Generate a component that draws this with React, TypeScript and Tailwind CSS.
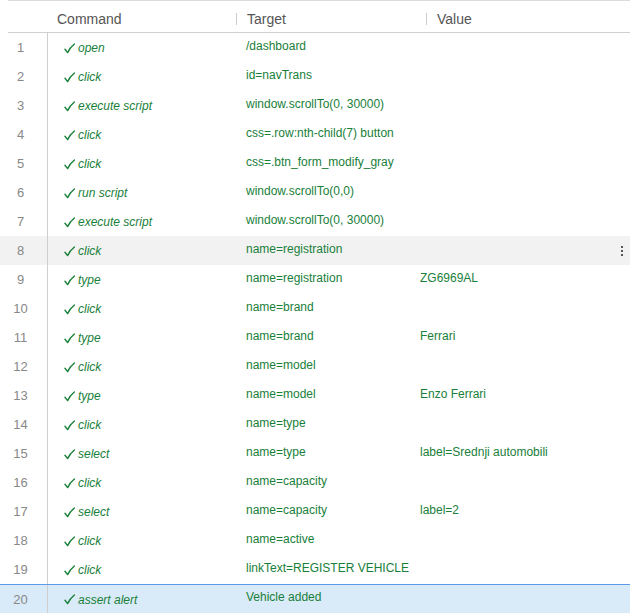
import React from 'react';

type Row = { cmd: string; target: string; value?: string };

const ROWS: Row[] = [
    { cmd: 'open', target: '/dashboard' },
    { cmd: 'click', target: 'id=navTrans' },
    { cmd: 'execute script', target: 'window.scrollTo(0, 30000)' },
    { cmd: 'click', target: 'css=.row:nth-child(7) button' },
    { cmd: 'click', target: 'css=.btn_form_modify_gray' },
    { cmd: 'run script', target: 'window.scrollTo(0,0)' },
    { cmd: 'execute script', target: 'window.scrollTo(0, 30000)' },
    { cmd: 'click', target: 'name=registration' },
    { cmd: 'type', target: 'name=registration', value: 'ZG6969AL' },
    { cmd: 'click', target: 'name=brand' },
    { cmd: 'type', target: 'name=brand', value: 'Ferrari' },
    { cmd: 'click', target: 'name=model' },
    { cmd: 'type', target: 'name=model', value: 'Enzo Ferrari' },
    { cmd: 'click', target: 'name=type' },
    { cmd: 'select', target: 'name=type', value: 'label=Srednji automobili' },
    { cmd: 'click', target: 'name=capacity' },
    { cmd: 'select', target: 'name=capacity', value: 'label=2' },
    { cmd: 'click', target: 'name=active' },
    { cmd: 'click', target: 'linkText=REGISTER VEHICLE' },
    { cmd: 'assert alert', target: 'Vehicle added' },
];

const Check = () => (
    <svg width="11" height="11" viewBox="0 0 11 11" className="mr-[3px] shrink-0">
        <path d="M1 6.2 L3.6 9.6 Q6 4.5 10.4 1" fill="none" stroke="#19803a" strokeWidth="1.4" strokeLinecap="round" strokeLinejoin="round" />
    </svg>
);

export default function App() {
    return (
        <div className="w-[630px] h-[614px] overflow-hidden bg-white text-[12px]" style={{ fontFamily: '"Liberation Sans", Arial, sans-serif' }}>
            {/* Header */}
            <div className="ml-2 border-t border-[#dcdcdc] h-[33px] border-b border-b-[#d0d0d0] flex items-center pt-[5px] text-[14px] text-[#555]">
                <div className="w-[228px] pl-[49px]">Command</div>
                <div className="w-[190px] flex items-center">
                    <span className="w-px h-[12px] bg-[#ccc] mr-[10px]" />
                    Target
                </div>
                <div className="flex items-center">
                    <span className="w-px h-[12px] bg-[#ccc] mr-[10px]" />
                    Value
                </div>
            </div>

            {/* Rows */}
            {ROWS.map((r, i) => {
                const n = i + 1;
                const hover = n === 8;
                const selected = n === 20;
                return (
                    <div
                        key={n}
                        className={`relative flex h-[29px] ${hover ? 'bg-[#f2f2f2]' : ''} ${selected ? 'bg-[#d9eaf8] border-t border-[#5b9be8]' : ''}`}
                    >
                        <div className="w-[47px] pl-[6px] pr-3 flex items-center justify-center text-[#888] text-[13px] pt-[1px]">{n}</div>
                        <div className="w-px bg-[#cfcfcf]" />
                        <div className="w-[198px] pl-[16px] flex items-center text-[#19803a] pt-[1px]">
                            <Check />
                            <span className="italic">{r.cmd}</span>
                        </div>
                        <div className="w-[174px] flex items-center pb-[4px] text-[#19803a]">{r.target}</div>
                        <div className="flex-1 flex items-center pb-[4px] text-[#19803a]">{r.value}</div>
                        {hover && (
                            <div className="absolute right-[7px] top-[10px] flex flex-col gap-[2px]">
                                <span className="w-[2px] h-[2px] bg-[#555]" />
                                <span className="w-[2px] h-[2px] bg-[#555]" />
                                <span className="w-[2px] h-[2px] bg-[#555]" />
                            </div>
                        )}
                    </div>
                );
            })}
        </div>
    );
}
